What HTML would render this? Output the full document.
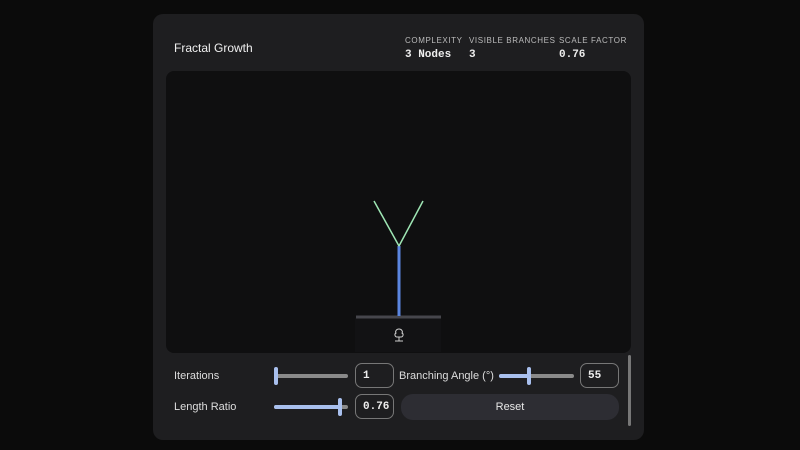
<!DOCTYPE html>
<html><head><style>
*{margin:0;padding:0;box-sizing:border-box}
body{width:800px;height:450px;background:#0b0b0b;font-family:"Liberation Sans",sans-serif;overflow:hidden;position:relative;color:#e8e8e8}
.panel{position:absolute;left:153px;top:14px;width:491px;height:426px;background:#1e1e20;border-radius:10px}
.abs{position:absolute}
.title{left:174px;top:41px;font-size:12px;color:#f0f0f0}
.lab{font-size:8px;letter-spacing:0.6px;color:#bbb;top:36px}
.val{font-family:"Liberation Mono",monospace;font-weight:bold;font-size:11px;top:49px;color:#eee}
.canvas{left:166px;top:71px;width:465px;height:282px;background:#0f0f10;border-radius:8px}
.ctl{font-size:11px;color:#ddd}
.track{height:4px;border-radius:2px;background:#8a8a8a}
.fill{height:4px;border-radius:2px;background:#a9c0ee}
.thumb{width:4px;height:18px;border-radius:2px;background:#a9c0ee}
.inp{border:1px solid #777;border-radius:7px;font-family:"Liberation Mono",monospace;font-weight:bold;font-size:11px;padding-left:7px;display:flex;align-items:center;color:#eee}
</style></head><body>
<div class="panel"></div>
<div class="abs title">Fractal Growth</div>
<div class="abs lab" style="left:405px">COMPLEXITY</div>
<div class="abs lab" style="left:469px">VISIBLE BRANCHES</div>
<div class="abs lab" style="left:559px">SCALE FACTOR</div>
<div class="abs val" style="left:405px">3 Nodes</div>
<div class="abs val" style="left:469px">3</div>
<div class="abs val" style="left:559px">0.76</div>
<div class="abs canvas"></div>
<svg class="abs" style="left:0;top:0" width="800" height="450">
<rect x="355" y="318" width="86" height="34" fill="#121214"/>
<line x1="356" y1="317" x2="441" y2="317" stroke="#46464c" stroke-width="3"/>
<line x1="399" y1="316" x2="399" y2="246" stroke="#5b86e0" stroke-width="3"/>
<line x1="399" y1="246" x2="374" y2="201" stroke="#9ee6b4" stroke-width="1.5"/>
<line x1="399" y1="246" x2="423" y2="201" stroke="#9ee6b4" stroke-width="1.5"/>
<g fill="none" stroke="#ccc" stroke-width="1">
<path d="M399 329 c-3 0 -4 3 -3 4 c-2 1 -1 4 1 4 h4 c2 0 3 -3 1 -4 c1 -1 0 -4 -3 -4 z"/>
<line x1="399" y1="337" x2="399" y2="341"/><line x1="395" y1="341" x2="403" y2="341"/>
</g>
<rect x="628" y="355" width="3" height="71" rx="1.5" fill="#777"/>
</svg>
<div class="abs ctl" style="left:174px;top:370px">Iterations</div>
<div class="abs track" style="left:276px;top:374px;width:72px"></div>
<div class="abs thumb" style="left:274px;top:367px"></div>
<div class="abs inp" style="left:355px;top:363px;width:39px;height:25px">1</div>
<div class="abs ctl" style="left:399px;top:370px">Branching Angle (°)</div>
<div class="abs track" style="left:499px;top:374px;width:75px"></div>
<div class="abs fill" style="left:499px;top:374px;width:31px"></div>
<div class="abs thumb" style="left:527px;top:367px"></div>
<div class="abs inp" style="left:580px;top:363px;width:39px;height:25px">55</div>
<div class="abs ctl" style="left:174px;top:401px">Length Ratio</div>
<div class="abs track" style="left:274px;top:405px;width:74px"></div>
<div class="abs fill" style="left:274px;top:405px;width:66px"></div>
<div class="abs thumb" style="left:338px;top:398px"></div>
<div class="abs inp" style="left:355px;top:394px;width:39px;height:25px">0.76</div>
<div class="abs" style="left:401px;top:394px;width:218px;height:26px;background:#2d2d33;border-radius:12px;font-size:11px;text-align:center;line-height:26px;color:#e8e8e8">Reset</div>
</body></html>
